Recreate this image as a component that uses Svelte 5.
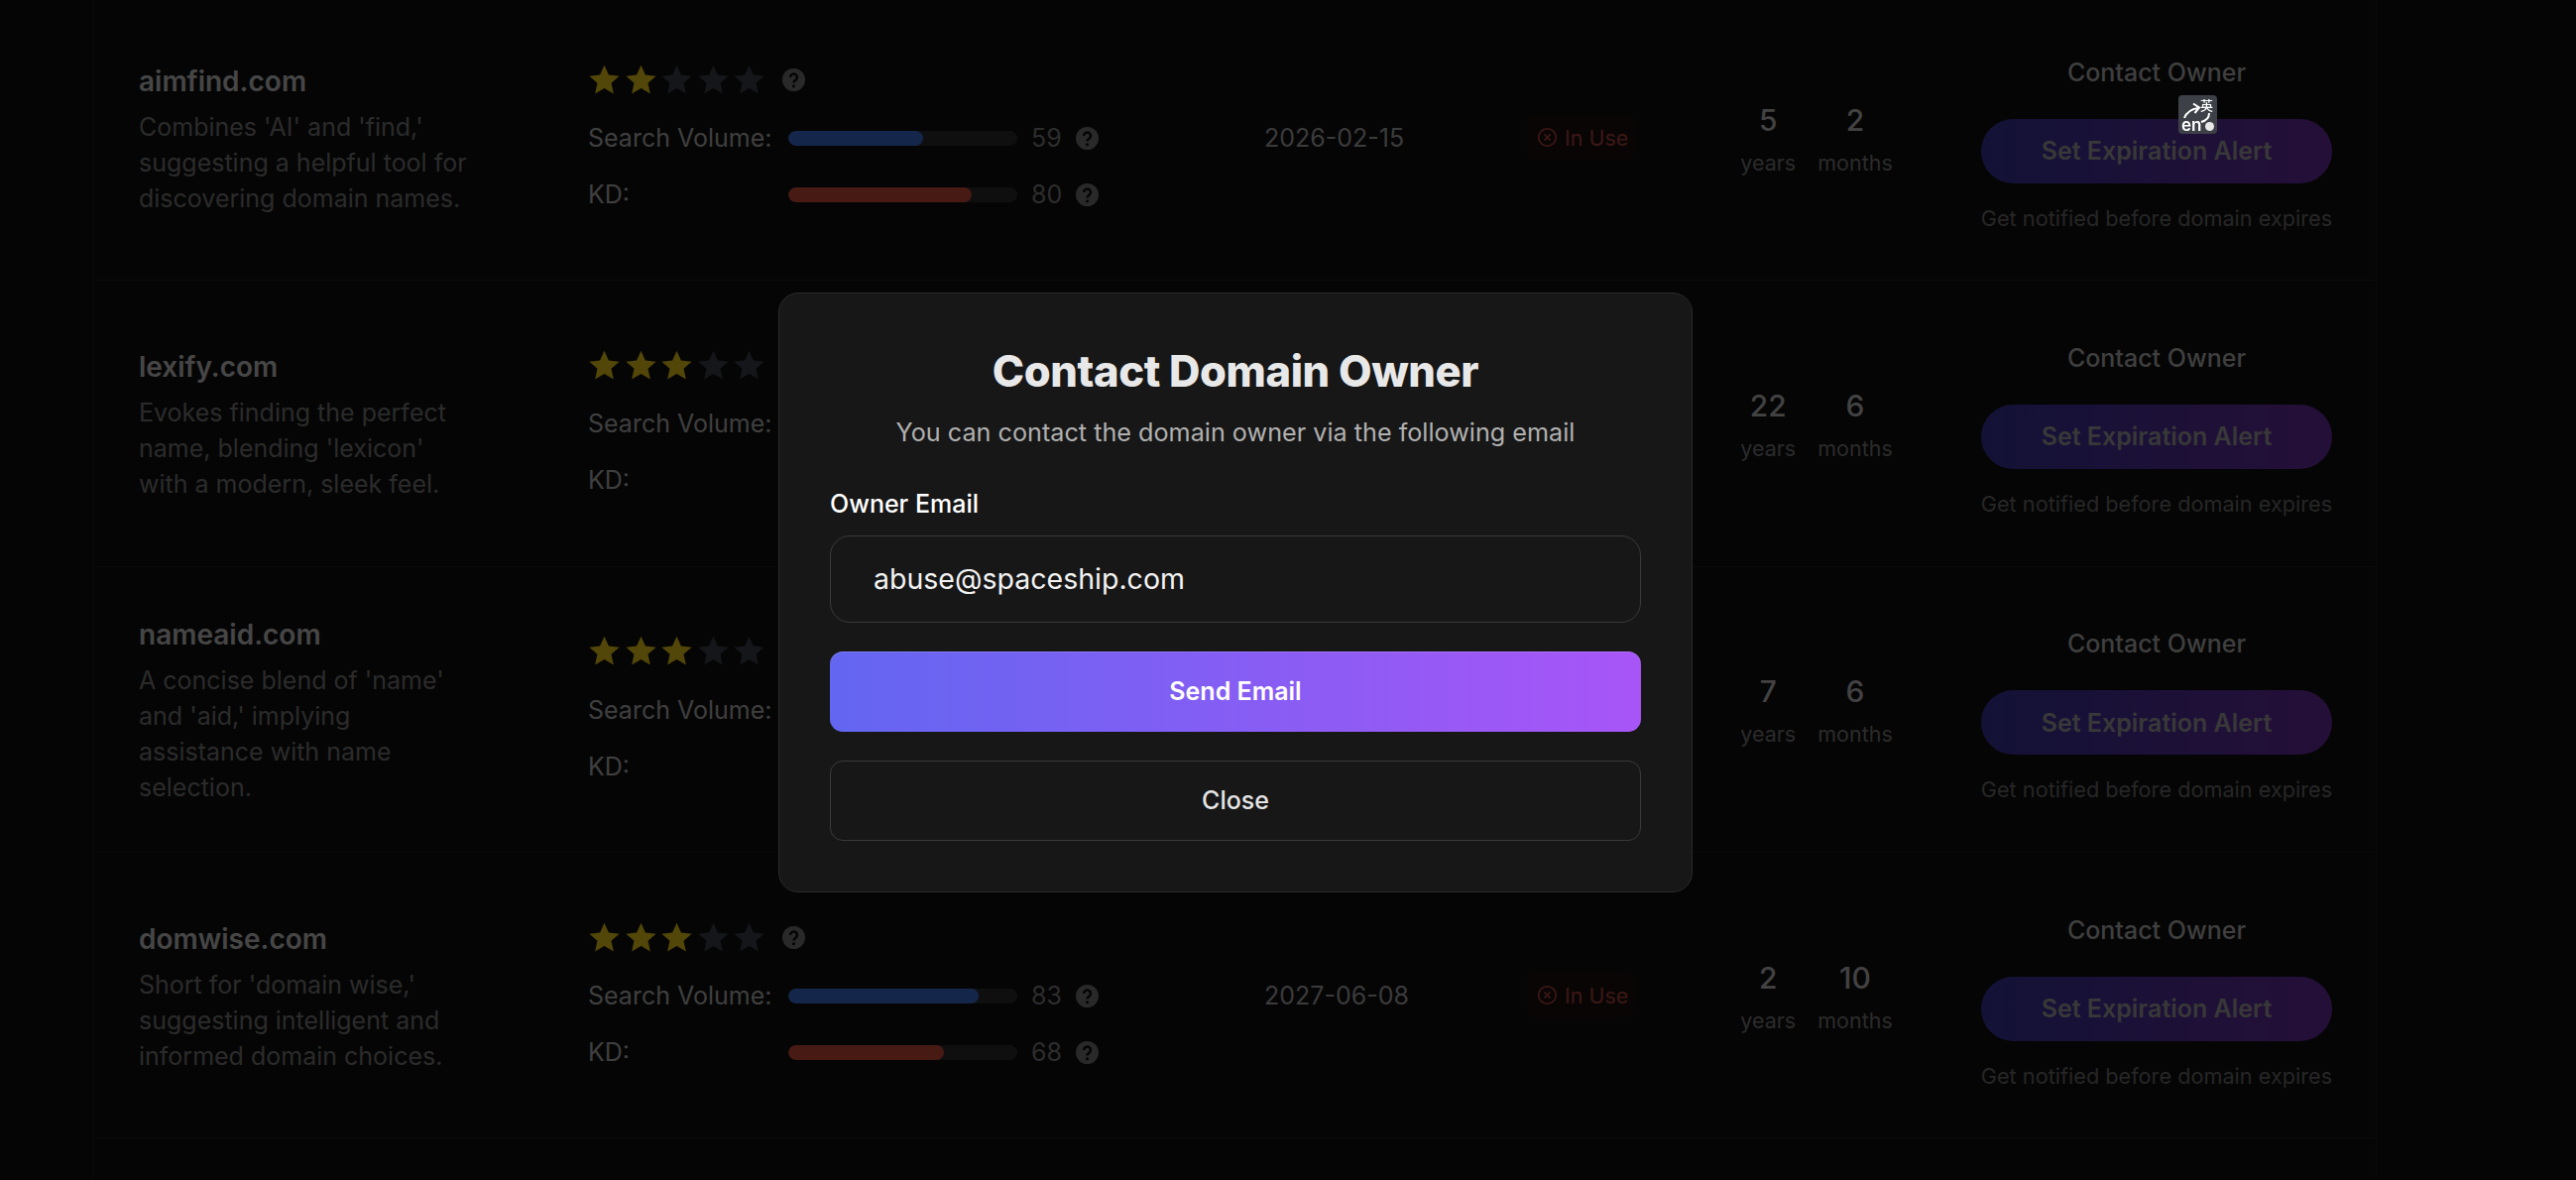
<script>
  const domains = [
    { name: "aimfind.com", desc: "Combines 'AI' and 'find,' suggesting a helpful tool for discovering domain names.", stars: 2, volume: 59, kd: 80, date: "2026-02-15", years: 5, months: 2 },
    { name: "lexify.com", desc: "Evokes finding the perfect name, blending 'lexicon' with a modern, sleek feel.", stars: 3, volume: 64, kd: 72, date: "2043-08-20", years: 22, months: 6 },
    { name: "nameaid.com", desc: "A concise blend of 'name' and 'aid,' implying assistance with name selection.", stars: 3, volume: 71, kd: 75, date: "2028-08-11", years: 7, months: 6 },
    { name: "domwise.com", desc: "Short for 'domain wise,' suggesting intelligent and informed domain choices.", stars: 3, volume: 83, kd: 68, date: "2027-06-08", years: 2, months: 10 },
  ];
</script>

{#snippet help()}
  <svg class="help" viewBox="0 0 24 24">
    <circle cx="12" cy="12" r="12" fill="#767676" />
    <path d="M8.4 9.4a3.6 3.6 0 1 1 5.5 3c-1.3.8-1.9 1.3-1.9 2.6" fill="none" stroke="#0c0c0c" stroke-width="2.6" />
    <circle cx="12" cy="18.6" r="1.6" fill="#0c0c0c" />
  </svg>
{/snippet}

<main class="table">
  {#each domains as d}
    <section class="row">
      <div class="info">
        <h3>{d.name}</h3>
        <p>{d.desc}</p>
      </div>

      <div class="metrics">
        <div class="stars">
          {#each [1, 2, 3, 4, 5] as n}
            <svg class="star" viewBox="0 0 24 24" fill={n <= d.stars ? "#ecc91c" : "#3a3f4a"}>
              <path d="M12 1.2l3.2 7.2 7.8.8-5.9 5.2 1.7 7.7L12 18.1l-6.8 4 1.7-7.7L1 9.2l7.8-.8z" />
            </svg>
          {/each}
          {@render help()}
        </div>
        <div class="metric">
          <span class="label">Search Volume:</span>
          <span class="track"><span class="fill blue" style="width: {d.volume}%"></span></span>
          <span class="value">{d.volume}</span>
          {@render help()}
        </div>
        <div class="metric">
          <span class="label">KD:</span>
          <span class="track"><span class="fill red" style="width: {d.kd}%"></span></span>
          <span class="value">{d.kd}</span>
          {@render help()}
        </div>
      </div>

      <div class="date">{d.date}</div>

      <div class="status-cell">
        <span class="status">
          <svg viewBox="0 0 24 24" fill="none" stroke="currentColor" stroke-width="2">
            <circle cx="12" cy="12" r="10" />
            <path d="M8.5 8.5l7 7M15.5 8.5l-7 7" />
          </svg>
          In Use
        </span>
      </div>

      <div class="age">
        <div class="age-part"><strong>{d.years}</strong><span>years</span></div>
        <div class="age-part"><strong>{d.months}</strong><span>months</span></div>
      </div>

      <div class="actions">
        <span class="contact">Contact Owner</span>
        <button class="alert">Set Expiration Alert</button>
        <span class="note">Get notified before domain expires</span>
      </div>
    </section>
  {/each}
</main>

<div class="overlay">
  <div class="modal">
    <h2>Contact Domain Owner</h2>
    <p class="sub">You can contact the domain owner via the following email</p>
    <span class="field-label">Owner Email</span>
    <div class="email">abuse@spaceship.com</div>
    <button class="send">Send Email</button>
    <button class="close">Close</button>
  </div>
</div>

<div class="translate">
  <svg viewBox="0 0 39 39" fill="none" stroke="#fff" stroke-width="2">
    <path d="M6 23c2-5 7-9 14-10" />
    <path d="M15 8.5l6 4-4.5 5.5" />
    <path d="M31 18c0 5-4 8-8 9" />
  </svg>
  <span class="zh">英</span>
  <span class="en">en</span>
  <span class="dot"></span>
</div>

<style>
  :global(body) {
    background: #0f0f0f;
    overflow: hidden;
    font-family: Inter, "Liberation Sans", sans-serif;
  }

  .table {
    box-sizing: border-box;
    width: 2304px;
    height: 1190px;
    margin-left: 93px;
    border-left: 1px solid #1f1f1f;
    border-right: 1px solid #1f1f1f;
    overflow: hidden;
  }

  .row {
    box-sizing: border-box;
    height: 288.3px;
    padding: 0 44px 0 46px;
    display: grid;
    grid-template-columns: 453px 682px 265px 190px 268px 354px;
    align-items: center;
    border-bottom: 1px solid #1f1f1f;
  }

  .row:first-child {
    margin-top: -5px;
  }

  .info {
    margin-top: 2px;
  }

  .info h3 {
    margin: 0 0 8px;
    font-size: 28px;
    line-height: 40px;
    font-weight: 600;
    color: #c8c8c8;
  }

  .info p {
    margin: 0;
    width: 336px;
    font-size: 25px;
    line-height: 36px;
    color: #7c7c7c;
  }

  .metrics {
    display: flex;
    flex-direction: column;
    gap: 30px;
    font-size: 25px;
    color: #b4b4b4;
  }

  .stars {
    display: flex;
    align-items: center;
    height: 27px;
    margin-bottom: 1px;
    transform: translateY(-1px);
  }

  .star {
    width: 33px;
    height: 33px;
    margin-right: 3.5px;
  }

  .stars .help {
    margin-left: 13px;
  }

  .metric {
    display: flex;
    align-items: center;
    height: 27px;
  }

  .label {
    width: 202px;
    white-space: nowrap;
  }

  .track {
    width: 231px;
    height: 15px;
    border-radius: 8px;
    background: #2c2c2c;
    overflow: hidden;
    display: block;
  }

  .fill {
    display: block;
    height: 100%;
    border-radius: 8px;
  }

  .fill.blue {
    background: #3b6fd6;
  }

  .fill.red {
    background: #cc4a3a;
  }

  .value {
    width: 45px;
    margin-left: 14px;
    color: #808080;
  }

  .help {
    width: 23px;
    height: 23px;
    flex: none;
  }

  .date {
    font-size: 25px;
    color: #a8a8a8;
  }

  .status {
    display: inline-flex;
    align-items: center;
    gap: 7px;
    box-sizing: border-box;
    width: 108px;
    height: 45px;
    padding-left: 10px;
    border-radius: 6px;
    background: rgba(239, 68, 68, 0.05);
    font-size: 21.5px;
    color: #ad443c;
    white-space: nowrap;
  }

  .status svg {
    width: 21px;
    height: 21px;
    flex: none;
  }

  .age {
    display: flex;
    justify-content: center;
    gap: 22px;
    margin-left: -64px;
    margin-top: 3px;
  }

  .age-part {
    display: flex;
    flex-direction: column;
    align-items: center;
    gap: 11px;
  }

  .age-part strong {
    font-size: 30px;
    line-height: 36px;
    font-weight: 500;
    color: #bcbcbc;
  }

  .age-part span {
    font-size: 21.5px;
    line-height: 28px;
    color: #7c7c7c;
  }

  .actions {
    display: flex;
    flex-direction: column;
    align-items: center;
    margin-top: 13px;
  }

  .contact {
    font-size: 25px;
    line-height: 36px;
    font-weight: 500;
    color: #b4b4b4;
  }

  .alert {
    width: 100%;
    height: 65px;
    margin-top: 29px;
    border: 0;
    border-radius: 33px;
    background: linear-gradient(90deg, #37349c, #6a2ca0);
    font: 600 25px Inter, "Liberation Sans", sans-serif;
    color: #a0a0a0;
  }

  .note {
    margin-top: 19px;
    font-size: 21.7px;
    line-height: 32px;
    color: #6e6e6e;
    white-space: nowrap;
  }

  .overlay {
    position: fixed;
    inset: 0;
    padding: 4px 106px 0 0;
    display: flex;
    align-items: center;
    justify-content: center;
    background: rgba(0, 0, 0, 0.65);
  }

  .modal {
    box-sizing: border-box;
    width: 922px;
    height: 605px;
    padding: 48px 51px 50px;
    display: flex;
    flex-direction: column;
    border: 1px solid #2a2a2a;
    border-radius: 20px;
    background: #171717;
  }

  .modal h2 {
    margin: 0;
    text-align: center;
    font-size: 43.5px;
    line-height: 60px;
    font-weight: 800;
    letter-spacing: -0.4px;
    color: #e8e8e8;
  }

  .sub {
    margin: 12px 0 0;
    text-align: center;
    font-size: 25.2px;
    line-height: 40px;
    color: #b0b0b0;
  }

  .field-label {
    margin-top: 34px;
    font-size: 25px;
    line-height: 36px;
    font-weight: 500;
    color: #fff;
  }

  .email {
    box-sizing: border-box;
    height: 88px;
    margin-top: 14px;
    padding-left: 43px;
    display: flex;
    align-items: center;
    border: 1px solid #3a3a3a;
    border-radius: 20px;
    font-size: 28.5px;
    color: #f2f2f2;
  }

  .send,
  .close {
    height: 81px;
    border-radius: 13px;
    font: 600 25px Inter, "Liberation Sans", sans-serif;
    color: #fff;
  }

  .send {
    margin-top: 29px;
    border: 0;
    background: linear-gradient(90deg, #6366f1, #a855f7);
    box-shadow: inset 0 1px 0 rgba(255, 255, 255, 0.15);
  }

  .close {
    margin-top: 29px;
    border: 1px solid #3a3a3a;
    background: transparent;
    font-weight: 500;
    color: #e5e5e5;
  }

  .translate {
    position: fixed;
    left: 2197px;
    top: 96px;
    width: 39px;
    height: 39px;
    border-radius: 4px;
    background: #3d4147;
    color: #fff;
    overflow: hidden;
  }

  .translate svg {
    position: absolute;
    inset: 0;
  }

  .zh {
    position: absolute;
    right: 4px;
    top: 3px;
    font: 500 13px/14px "Noto Sans CJK SC", sans-serif;
  }

  .en {
    position: absolute;
    left: 3px;
    bottom: 0;
    font: 600 17px/17px Inter, sans-serif;
  }

  .dot {
    position: absolute;
    right: 3px;
    bottom: 3px;
    width: 9px;
    height: 9px;
    border-radius: 50%;
    background: #e8e8e8;
  }
</style>
